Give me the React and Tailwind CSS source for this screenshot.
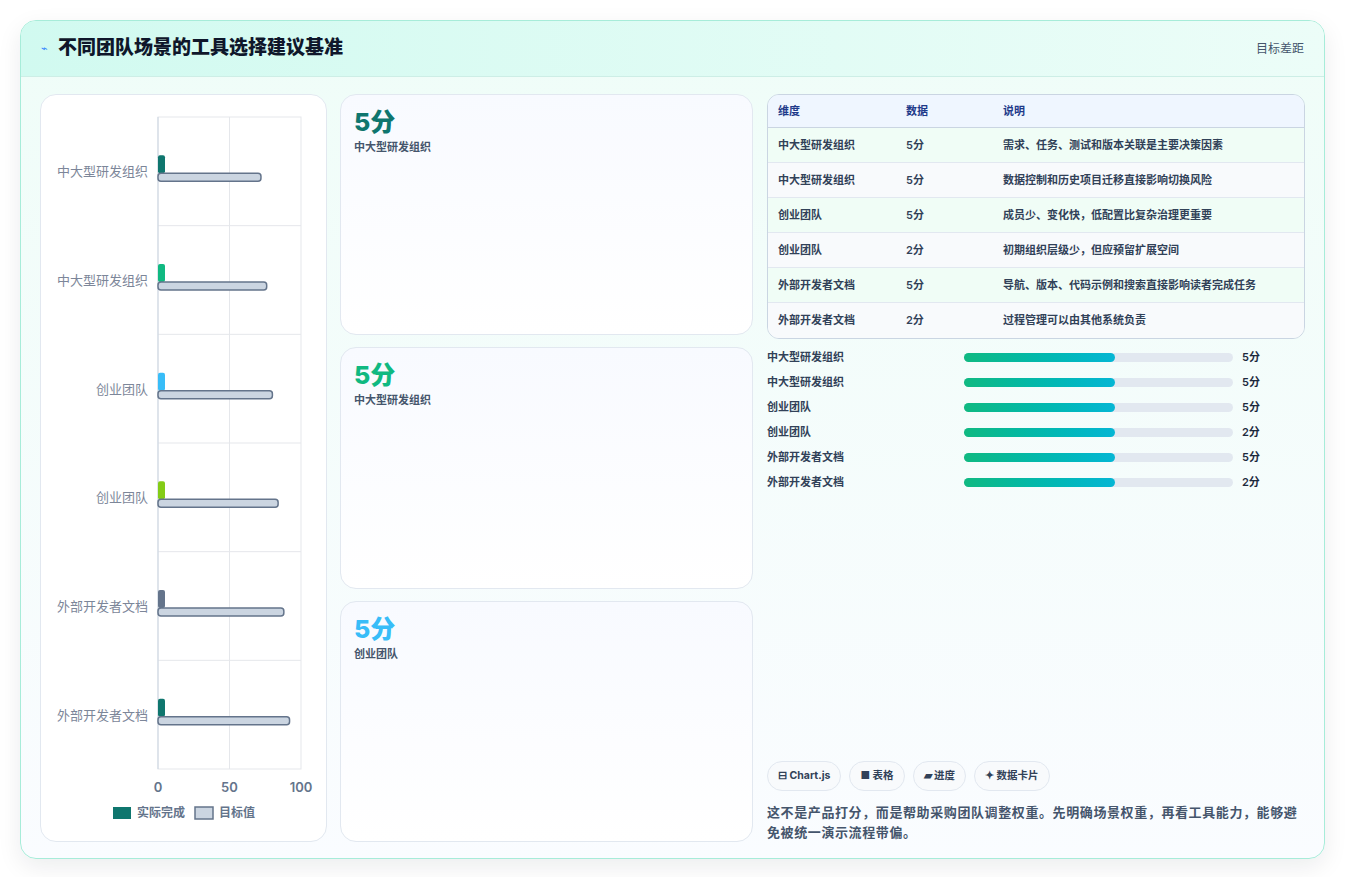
import React from "react";

const cats = [
  { l: "中大型研发组织", c: "#0f766e", t: 72 },
  { l: "中大型研发组织", c: "#10b981", t: 76 },
  { l: "创业团队", c: "#38bdf8", t: 80 },
  { l: "创业团队", c: "#84cc16", t: 84 },
  { l: "外部开发者文档", c: "#64748b", t: 88 },
  { l: "外部开发者文档", c: "#0f766e", t: 92 },
];
const rows = [
  ["中大型研发组织", "5分", "需求、任务、测试和版本关联是主要决策因素"],
  ["中大型研发组织", "5分", "数据控制和历史项目迁移直接影响切换风险"],
  ["创业团队", "5分", "成员少、变化快，低配置比复杂治理更重要"],
  ["创业团队", "2分", "初期组织层级少，但应预留扩展空间"],
  ["外部开发者文档", "5分", "导航、版本、代码示例和搜索直接影响读者完成任务"],
  ["外部开发者文档", "2分", "过程管理可以由其他系统负责"],
];

function Chart() {
  const x0 = 117, w = 143, top = 22, h = 652, rh = h / 6;
  return (
    <svg width="286" height="746" className="block">
      <rect x={x0} y={top} width={w} height={h} fill="none" stroke="#e5e7eb" />
      {[1, 2, 3, 4, 5].map((i) => (
        <line key={i} x1={x0} x2={x0 + w} y1={top + rh * i} y2={top + rh * i} stroke="#e5e7eb" />
      ))}
      <line x1={x0 + w / 2} x2={x0 + w / 2} y1={top} y2={top + h} stroke="#e5e7eb" />
      <line x1={x0} x2={x0} y1={top} y2={top + h} stroke="#cbd5e1" />
      {cats.map((c, i) => {
        const cy = top + rh * i + rh / 2;
        return (
          <g key={i}>
            <text x={x0 - 10} y={cy + 5} textAnchor="end" fontSize="13" fill="#7c8699">{c.l}</text>
            <rect x={x0} y={cy - 16} width={7} height={18} rx={2} fill={c.c} />
            <rect x={x0} y={cy + 2} width={c.t * 1.43} height={8} rx={3} fill="#cbd5e1" stroke="#64748b" strokeWidth="1.5" />
          </g>
        );
      })}
      {[0, 50, 100].map((v, i) => (
        <text key={v} x={x0 + (w / 2) * i} y={top + h + 23} textAnchor="middle" fontSize="13" fontWeight="600" fill="#64748b">{v}</text>
      ))}
      <rect x={72} y={712} width={18} height={12} fill="#0f766e" />
      <text x={96} y={722} fontSize="12" fontWeight="600" fill="#64748b">实际完成</text>
      <rect x={154} y={712} width={18} height={12} fill="#cbd5e1" stroke="#64748b" strokeWidth="1.5" />
      <text x={178} y={722} fontSize="12" fontWeight="600" fill="#64748b">目标值</text>
    </svg>
  );
}

function Card({ n, color, label }) {
  return (
    <div className="flex-1 rounded-2xl border border-slate-200 bg-gradient-to-b from-[#f8faff] to-white px-[13px] pt-3">
      <div className={`text-[25px] font-extrabold leading-[30px] ${color}`}>{n}</div>
      <div className="mt-[2px] text-[11px] font-semibold text-slate-600">{label}</div>
    </div>
  );
}

export default function App() {
  return (
    <div className="min-h-[877px] bg-white p-5" style={{ fontFamily: "Inter, 'Noto Sans CJK SC', sans-serif" }}>
      <div className="flex h-[839px] flex-col overflow-hidden rounded-2xl border border-[#a7ecd9] bg-gradient-to-b from-[#effdf8] to-[#fafcff] shadow-[0_8px_24px_rgba(15,23,42,0.08)]">
        <div className="flex h-[56px] shrink-0 items-center justify-between border-b border-[#cdeee6] bg-gradient-to-r from-[#d1faf0] to-[#ecfdf8] px-5">
          <div className="flex items-center gap-[10px]">
            <span className="text-[11px] text-blue-500">⌁</span>
            <span className="text-[19px] font-extrabold text-slate-900">不同团队场景的工具选择建议基准</span>
          </div>
          <span className="text-[12px] text-slate-600">目标差距</span>
        </div>
        <div className="flex flex-1 gap-[13px] px-[19px] pb-[18px] pt-[17px]">
          <div className="w-[287px] rounded-2xl border border-slate-200 bg-white">
            <Chart />
          </div>
          <div className="flex w-[413px] flex-col gap-[12px]">
            <Card n="5分" color="text-[#0f766e]" label="中大型研发组织" />
            <Card n="5分" color="text-[#10b981]" label="中大型研发组织" />
            <Card n="5分" color="text-[#38bdf8]" label="创业团队" />
          </div>
          <div className="ml-[1px] flex flex-1 flex-col">
            <div className="overflow-hidden rounded-xl border border-slate-300 text-[11px]">
              <div className="flex h-[33px] items-center border-b border-slate-300 bg-[#eff6ff] font-semibold text-[#1e3a8a]">
                <div className="w-[138px] pl-[10px]">维度</div>
                <div className="w-[97px]">数据</div>
                <div>说明</div>
              </div>
              {rows.map((r, i) => (
                <div key={i} className={`flex h-[35px] items-center font-semibold text-slate-700 ${i < 5 ? "border-b border-slate-200" : ""} ${i % 2 === 0 ? "bg-[#f0fdf6]" : "bg-[#f8fafc]"}`}>
                  <div className="w-[138px] pl-[10px]">{r[0]}</div>
                  <div className="w-[97px]">{r[1]}</div>
                  <div>{r[2]}</div>
                </div>
              ))}
            </div>
            <div className="mt-[6px] flex flex-col">
              {rows.map((r, i) => (
                <div key={i} className="flex h-[25px] items-center text-[11px] font-semibold text-slate-700">
                  <div className="w-[197px]">{r[0]}</div>
                  <div className="h-[9px] w-[269px] rounded-full bg-slate-200">
                    <div className="h-full w-[56%] rounded-full bg-gradient-to-r from-[#10b981] to-[#06b6d4]" />
                  </div>
                  <div className="ml-[9px] text-slate-800">{r[1]}</div>
                </div>
              ))}
            </div>
            <div className="mt-auto flex gap-2">
              {["⊟ Chart.js", "■ 表格", "▰ 进度", "✦ 数据卡片"].map((t) => (
                <span key={t} className="rounded-full border border-slate-200 bg-[#f8fafc] px-[10px] py-[6px] text-[10.5px] font-bold text-slate-700">{t}</span>
              ))}
            </div>
            <p className="mt-[11px] text-[13px] font-semibold leading-[20px] tracking-[0.6px] text-slate-600">
              这不是产品打分，而是帮助采购团队调整权重。先明确场景权重，再看工具能力，能够避免被统一演示流程带偏。
            </p>
          </div>
        </div>
      </div>
    </div>
  );
}
